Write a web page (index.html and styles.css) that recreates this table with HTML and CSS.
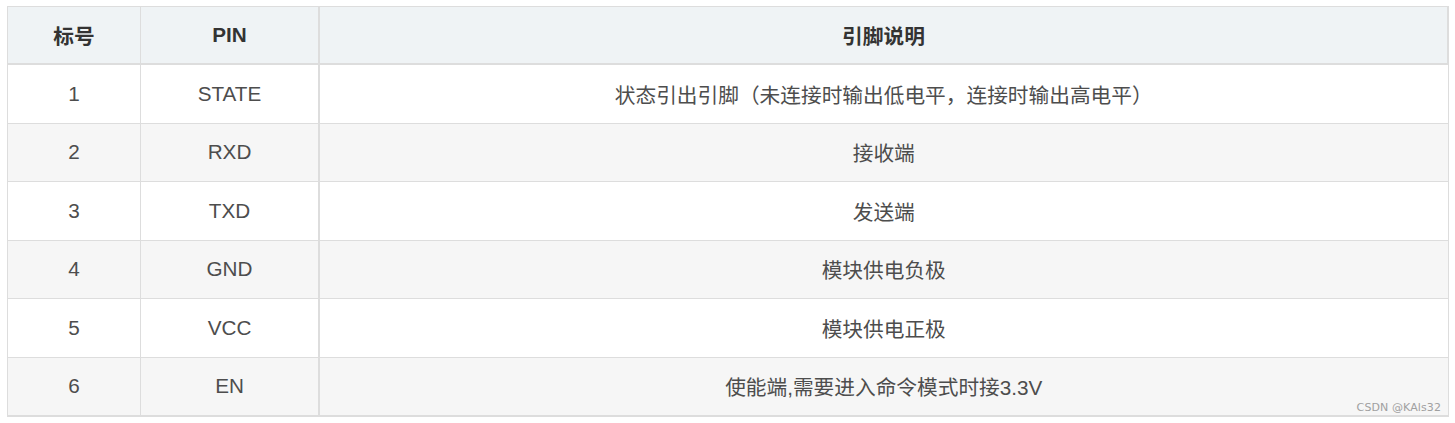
FILE: index.html
```html
<!DOCTYPE html>
<html lang="zh">
<head>
<meta charset="utf-8">
<title>PIN</title>
<link rel="stylesheet" href="styles.css">
</head>
<body>
<div class="wrap">
  <table class="pins">
    <thead>
      <tr><th class="c1">标号</th><th class="c2">PIN</th><th class="c3">引脚说明</th></tr>
    </thead>
    <tbody>
      <tr><td>1</td><td>STATE</td><td class="c3">状态引出引脚（未连接时输出低电平，连接时输出高电平）</td></tr>
      <tr><td>2</td><td>RXD</td><td class="c3">接收端</td></tr>
      <tr><td>3</td><td>TXD</td><td class="c3">发送端</td></tr>
      <tr><td>4</td><td>GND</td><td class="c3">模块供电负极</td></tr>
      <tr><td>5</td><td>VCC</td><td class="c3">模块供电正极</td></tr>
      <tr><td>6</td><td>EN</td><td class="c3">使能端,需要进入命令模式时接3.3V</td></tr>
    </tbody>
  </table>
  <span class="mark">CSDN @KAls32</span>
</div>
</body>
</html>
```

FILE: styles.css
```css
html, body {
  margin: 0;
  padding: 0;
  background: #ffffff;
}
.wrap {
  position: relative;
  padding: 6px 6px 0 7px;
  width: 1442px;
}
.pins {
  width: 1442px;
  border-collapse: collapse;
  table-layout: fixed;
  font-family: "Liberation Sans", Arial, "Noto Sans CJK SC", sans-serif;
  font-size: 20.7px;
  color: #4d4d4d;
}
.pins th,
.pins td {
  border: 1px solid #dddddd;
  text-align: center;
  vertical-align: middle;
  padding: 0;
  height: 57.5px;
}
.pins th {
  height: 56px;
  background: #eff3f5;
  color: #333333;
  font-weight: bold;
  border-bottom: 2px solid #dddddd;
}
.pins th.c3 {
  border-right: 2px solid #dddddd;
}
.pins .c1 { width: 132px; }
.pins .c2 { width: 177px; }
.pins .c3 {
  border-left: 2px solid #dddddd;
}
.pins tbody tr:nth-child(even) td {
  background: #f6f6f6;
}
.pins tbody tr:last-child td {
  border-bottom: 2px solid #dddddd;
}
.mark {
  position: absolute;
  right: 14px;
  bottom: 3px;
  font-family: "DejaVu Sans", "Liberation Sans", sans-serif;
  font-size: 11px;
  color: #a0a0a0;
  letter-spacing: 0.1px;
}
```
